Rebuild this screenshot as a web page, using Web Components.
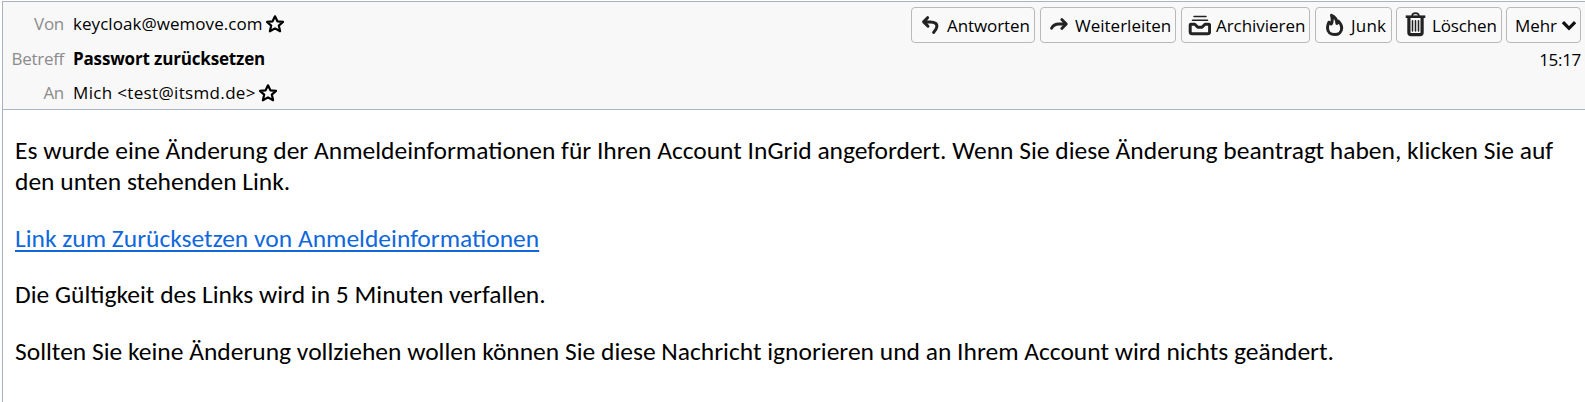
<!DOCTYPE html>
<html lang="de">
<head>
<meta charset="utf-8">
<title>Passwort zurücksetzen</title>
<style>
body { margin: 0; background: #fff; }
</style>
</head>
<body>
<mail-view></mail-view>
<script>
function define(name, html, setup) {
  const tpl = document.createElement('template');
  tpl.innerHTML = html;
  customElements.define(name, class extends HTMLElement {
    connectedCallback() {
      if (this.shadowRoot) return;
      this.attachShadow({ mode: 'open' }).append(tpl.content.cloneNode(true));
      if (setup) setup(this);
    }
  });
}

const ICONS = {
  reply: '<path d="M8.6 7.700 4.600 11.900l4.400 4.300M5 11.900h6.200c4.600 0 7.200 1.800 6.600 5.200-.4 2.200-1.700 3.600-3.200 5.300" stroke-width="3"/>',
  forward: '<path d="M3.500 18.300c1.600-3.200 4.200-4.300 7.400-4.300h7.200M13.800 9.400l4.500 4.600-4.500 4.600" stroke-width="2.800"/>',
  archive: '<path d="M6 6.500h12M4.500 10.200h15" stroke-width="1.500"/><path d="M3 14.200h3.800l3 3h4.200l3-3h3.800c.5 0 .8.4.8.9v6.700c0 1.200-.8 2-2 2H4.200c-1.200 0-2-.8-2-2v-6.700c0-.5.3-.9.8-.9z" stroke-width="3"/>',
  junk: '<path d="M8.500 5.300C12 6.700 13.800 9.900 13.900 13.500c1-.6 1.300-1.400 1.300-2.500 2.600 2.500 3.500 4.800 3.500 6.900 0 4.200-3 6.700-7 6.700s-7.200-2.500-7.200-6.700c0-2.400.8-4.200 1.400-5.700.9.800 1.500 1.500 2.300 1.800 1.600-2.600 1.300-5.400.3-8.700z" stroke-width="3"/>',
  trash: '<path d="M8.100 6c0-2 1.400-2.900 3.400-2.900S14.900 4 14.900 6" stroke-width="1.600"/><path d="M3 6.700h17" stroke-width="2.600" stroke-linecap="square"/><path d="M4.900 8v14.400c0 1.500.8 2.200 2.200 2.200h8.800c1.400 0 2.200-.7 2.200-2.200V8" stroke-width="3.200"/><path d="M8.500 10.800v10.200M11.500 10.800v10.200M14.500 10.800v10.200" stroke-width="1.500"/>',
  chevron: '<path d="M2 3.200 7 8.300l5-5.100" stroke-width="3.200" stroke="#111" stroke-linecap="square" stroke-linejoin="miter"/>',
  star: '<path d="m10 2.300 2.400 5 5.600.6-4.200 3.700 1.300 5.700-5.100-2.900-5.100 2.900 1.300-5.700L2 7.900l5.600-.6z" stroke="#000" stroke-width="2.200"/>'
};
const BOX = { chevron: [14, 11], star: [20, 20] };

define('mail-icon', `
<style>
  :host { display: block; flex: none; }
  svg { display: block; fill: none; stroke: #222; stroke-linecap: round; stroke-linejoin: round; }
</style>`, el => {
  const name = el.getAttribute('name');
  const [w, h] = BOX[name] || [23, 30];
  el.shadowRoot.innerHTML += `<svg width="${w}" height="${h}" viewBox="0 0 ${w} ${h}">${ICONS[name]}</svg>`;
});

define('mail-button', `
<style>
  :host { display: flex; align-items: center; box-sizing: border-box; height: 36px;
    border: 1px solid #b9b9b9; border-radius: 4px; background: #f9f9f9; white-space: nowrap; line-height: 34px; }
  ::slotted(span) { padding-top: 1px; }
</style>
<slot></slot>`);

define('mail-field', `
<style>
  :host { display: grid; grid-template-columns: 61px auto auto; align-items: center; justify-content: start; white-space: nowrap; line-height: 34px; height: 34px; }
  .label { color: #8c8c8c; text-align: right; letter-spacing: -.3px; }
  .value { margin-left: 9px; }
</style>
<span class="label"><slot name="label"></slot></span>
<span class="value"><slot></slot></span>
<slot name="action"></slot>`);

define('mail-header', `
<style>
  :host { display: flex; justify-content: space-between; box-sizing: border-box; height: 109px;
    border-top: 1px solid #a9b1c5; border-bottom: 1px solid #a9b7c9; background: #f8f8f8; color: #000;
    font: 17px "Open Sans", "Noto Sans", sans-serif; }
  .fields { padding-top: 5px; }
  .side { padding: 5px 4px 0 0; }
  .bar { display: flex; }
  .time { text-align: right; line-height: 34px; letter-spacing: -.3px; }
  mail-icon[name=star] { margin-left: 2px; }
  b { letter-spacing: -.16px; }
</style>
<div class="fields">
  <mail-field><span slot="label">Von</span><span style="letter-spacing:.05px">keycloak@wemove.com</span><mail-icon slot="action" name="star"></mail-icon></mail-field>
  <mail-field style="height:35px"><span slot="label">Betreff</span><b>Passwort zurücksetzen</b></mail-field>
  <mail-field><span slot="label">An</span><span style="letter-spacing:.34px">Mich &lt;test@itsmd.de&gt;</span><mail-icon slot="action" name="star"></mail-icon></mail-field>
</div>
<div class="side">
  <div class="bar">
    <mail-button style="width:124px;padding-left:7px;margin-right:5px;letter-spacing:-.1px"><mail-icon name="reply"></mail-icon><span style="margin-left:5px">Antworten</span></mail-button>
    <mail-button style="width:136px;padding-left:7px;margin-right:5px"><mail-icon name="forward"></mail-icon><span style="margin-left:4px">Weiterleiten</span></mail-button>
    <mail-button style="width:129px;padding-left:6px;margin-right:5px;letter-spacing:-.05px"><mail-icon name="archive"></mail-icon><span style="margin-left:5px">Archivieren</span></mail-button>
    <mail-button style="width:77px;padding-left:7px;margin-right:4px;letter-spacing:.2px"><mail-icon name="junk"></mail-icon><span style="margin-left:5px">Junk</span></mail-button>
    <mail-button style="width:106px;padding-left:7px;margin-right:4px;letter-spacing:-.15px"><mail-icon name="trash"></mail-icon><span style="margin-left:5px">Löschen</span></mail-button>
    <mail-button style="width:75px;padding-left:8px;letter-spacing:-.1px"><span>Mehr</span><mail-icon name="chevron" style="margin-left:5px"></mail-icon></mail-button>
  </div>
  <div class="time">15:17</div>
</div>`);

define('mail-body', `
<style>
  :host { display: block; padding: 25px 13px 0 12px; color: #000;
    font: 25.5px/31px Carlito, Calibri, Lato, sans-serif; }
  ::slotted(p) { margin: 0 0 25.5px; }
</style>
<slot></slot>`);

define('mail-view', `
<style>
  :host { display: block; box-sizing: border-box; height: 402px; padding-top: 1px; overflow: hidden;
    background: #fff; }
  .frame { box-sizing: border-box; height: 401px; margin-left: 2px; border-left: 1px solid #a9b1c5; }
  a { color: #1068dc; text-decoration: underline; text-decoration-thickness: 2px; text-underline-offset: 3px; text-decoration-skip-ink: none; }
</style>
<div class="frame">
  <mail-header></mail-header>
  <mail-body>
    <p>Es wurde eine Änderung der Anmeldeinformationen für Ihren Account InGrid angefordert. Wenn Sie diese Änderung beantragt haben, klicken Sie auf den unten stehenden Link.</p>
    <p><a href="#">Link zum Zurücksetzen von Anmeldeinformationen</a></p>
    <p>Die Gültigkeit des Links wird in 5 Minuten verfallen.</p>
    <p>Sollten Sie keine Änderung vollziehen wollen können Sie diese Nachricht ignorieren und an Ihrem Account wird nichts geändert.</p>
  </mail-body>
</div>`);
</script>
</body>
</html>
